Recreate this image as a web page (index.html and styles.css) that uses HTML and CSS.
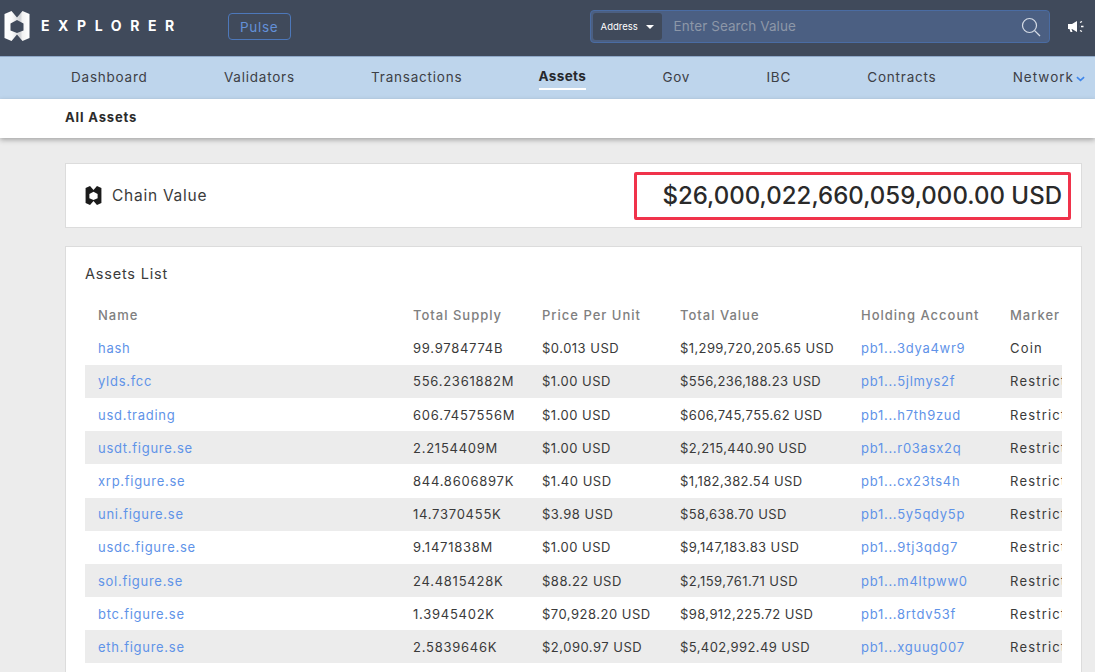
FILE: index.html
```html
<!DOCTYPE html>
<html lang="en">
<head>
<meta charset="utf-8">
<title>Explorer - Assets</title>
<link rel="stylesheet" href="styles.css">
</head>
<body>
<div class="page">
  <header class="topbar">
    <div class="brand">
      <svg class="brand-mark" viewBox="0 0 26 30" width="26" height="30" aria-hidden="true">
        <defs><linearGradient id="lg" x1="0" x2="1"><stop offset="0" stop-color="#fff"/><stop offset="0.3" stop-color="#fafafa"/><stop offset="0.62" stop-color="#cfd1d5"/><stop offset="0.72" stop-color="#f2f2f2"/><stop offset="1" stop-color="#fff"/></linearGradient></defs>
        <path fill="url(#lg)" fill-rule="evenodd" d="M0.5 3 L7.5 0 L13 6.5 L18.5 0 L25.5 3 L25.5 27 L18.5 30 L13 23.5 L7.5 30 L0.5 27 Z M13 9 L6.5 12.5 L6.5 19.5 L13 22 L19.5 19.5 L19.5 12.5 Z"/>
      </svg>
      <span class="brand-name">EXPLORER</span>
    </div>
    <button class="pulse">Pulse</button>
    <div class="search">
      <div class="search-type"><span>Address</span><i class="caret"></i></div>
      <span class="search-input">Enter Search Value</span>
      <svg class="search-icon" viewBox="0 0 20 20" width="20" height="20" aria-hidden="true"><circle cx="8.5" cy="8.5" r="7" fill="none" stroke="#d5dbe5" stroke-width="1.2"/><path d="M13.6 13.6 L19 19" stroke="#d5dbe5" stroke-width="1.3" fill="none"/></svg>
    </div>
    <svg class="announce" viewBox="0 0 17 13" width="17" height="13" aria-hidden="true"><path fill="#fff" d="M1 4 H5 L10 1 V12 L5 9 H4.5 L5.5 12 H3.5 L2.5 9 H1 Z"/><path d="M12 6.5 H12.1" stroke="#fff" stroke-width="2" fill="none"/><path d="M13 2.5 L15 1.5 M14 6.5 H16.5 M13 10.5 L15 11.5" stroke="#fff" stroke-width="1.3" fill="none"/></svg>
  </header>

  <nav class="mainnav">
    <a class="nav-item">Dashboard</a>
    <a class="nav-item">Validators</a>
    <a class="nav-item">Transactions</a>
    <a class="nav-item active">Assets</a>
    <a class="nav-item">Gov</a>
    <a class="nav-item">IBC</a>
    <a class="nav-item">Contracts</a>
    <a class="nav-item network">Network<svg viewBox="0 0 10 6" width="9" height="6" aria-hidden="true"><path d="M1 1 L5 4.6 L9 1" fill="none" stroke="#3f86ea" stroke-width="1.8"/></svg></a>
  </nav>

  <div class="subnav"><a class="subnav-item">All Assets</a></div>

  <main class="content">
    <section class="card chain">
      <div class="chain-label">
        <svg class="chain-mark" viewBox="0 0 26 30" width="17" height="19" aria-hidden="true"><path fill="#1b1b1b" fill-rule="evenodd" d="M0.5 3 L7.5 0 L13 6.5 L18.5 0 L25.5 3 L25.5 27 L18.5 30 L13 23.5 L7.5 30 L0.5 27 Z M13 9 L6.5 12.5 L6.5 19.5 L13 22 L19.5 19.5 L19.5 12.5 Z"/></svg>
        <span>Chain Value</span>
      </div>
      <div class="chain-value">$26,000,022,660,059,000.00 USD</div>
      <div class="highlight"></div>
    </section>

    <section class="card assets">
      <h2 class="assets-title">Assets List</h2>
      <table class="table">
        <colgroup>
          <col class="c1"><col class="c2"><col class="c3"><col class="c4"><col class="c5"><col class="c6">
        </colgroup>
        <thead>
          <tr><th>Name</th><th>Total Supply</th><th>Price Per Unit</th><th>Total Value</th><th>Holding Account</th><th>Marker</th></tr>
        </thead>
        <tbody>
          <tr><td><a>hash</a></td><td>99.9784774B</td><td>$0.013 USD</td><td>$1,299,720,205.65 USD</td><td><a>pb1...3dya4wr9</a></td><td>Coin</td></tr>
          <tr><td><a>ylds.fcc</a></td><td>556.2361882M</td><td>$1.00 USD</td><td>$556,236,188.23 USD</td><td><a>pb1...5jlmys2f</a></td><td>Restricted</td></tr>
          <tr><td><a>usd.trading</a></td><td>606.7457556M</td><td>$1.00 USD</td><td>$606,745,755.62 USD</td><td><a>pb1...h7th9zud</a></td><td>Restricted</td></tr>
          <tr><td><a>usdt.figure.se</a></td><td>2.2154409M</td><td>$1.00 USD</td><td>$2,215,440.90 USD</td><td><a>pb1...r03asx2q</a></td><td>Restricted</td></tr>
          <tr><td><a>xrp.figure.se</a></td><td>844.8606897K</td><td>$1.40 USD</td><td>$1,182,382.54 USD</td><td><a>pb1...cx23ts4h</a></td><td>Restricted</td></tr>
          <tr><td><a>uni.figure.se</a></td><td>14.7370455K</td><td>$3.98 USD</td><td>$58,638.70 USD</td><td><a>pb1...5y5qdy5p</a></td><td>Restricted</td></tr>
          <tr><td><a>usdc.figure.se</a></td><td>9.1471838M</td><td>$1.00 USD</td><td>$9,147,183.83 USD</td><td><a>pb1...9tj3qdg7</a></td><td>Restricted</td></tr>
          <tr><td><a>sol.figure.se</a></td><td>24.4815428K</td><td>$88.22 USD</td><td>$2,159,761.71 USD</td><td><a>pb1...m4ltpww0</a></td><td>Restricted</td></tr>
          <tr><td><a>btc.figure.se</a></td><td>1.3945402K</td><td>$70,928.20 USD</td><td>$98,912,225.72 USD</td><td><a>pb1...8rtdv53f</a></td><td>Restricted</td></tr>
          <tr><td><a>eth.figure.se</a></td><td>2.5839646K</td><td>$2,090.97 USD</td><td>$5,402,992.49 USD</td><td><a>pb1...xguug007</a></td><td>Restricted</td></tr>
        </tbody>
      </table>
    </section>
  </main>
</div>
</body>
</html>
```

FILE: styles.css
```css
* { box-sizing: border-box; }
html, body { margin: 0; padding: 0; }
body {
  font-family: Inter, "Open Sans", "Liberation Sans", sans-serif;
  color: #3a3a3a;
  background: #ececec;
}
.page { height: 672px; overflow: hidden; }

.topbar {
  height: 56px;
  background: #404a5b;
  display: flex;
  align-items: center;
  padding: 0 11px 3px 4px;
}
.brand { display: flex; align-items: center; width: 224px; margin-top: -1px; }
.brand-mark { flex: none; display: block; }
.brand-name {
  margin-left: 11px;
  margin-bottom: 2px;
  color: #fff;
  font-size: 14px;
  font-weight: 700;
  letter-spacing: 8.6px;
}
.pulse {
  width: 63px;
  height: 27px;
  background: transparent;
  border: 1px solid #4d78ba;
  border-radius: 4px;
  color: #6390d8;
  font: 400 13.5px Inter, sans-serif;
  letter-spacing: 0.7px;
  padding: 0;
}
.search {
  margin-left: 299px;
  width: 461px;
  height: 33px;
  background: #4b5f82;
  border: 1px solid #4a6ca3;
  border-radius: 4px;
  display: flex;
  align-items: center;
  padding: 0 8px 0 2px;
}
.search-type {
  width: 69px;
  height: 27px;
  background: #404a5b;
  border-radius: 3px;
  display: flex;
  align-items: center;
  padding-left: 8px;
  color: #fff;
  font-size: 9.5px;
  flex: none;
}
.caret {
  margin-left: 8px;
  width: 0;
  height: 0;
  border-left: 4px solid transparent;
  border-right: 4px solid transparent;
  border-top: 4px solid #fff;
}
.search-input {
  flex: 1;
  margin-left: 12px;
  padding-bottom: 2px;
  color: #8d97a8;
  font-size: 13.5px;
  letter-spacing: 0.07px;
}
.search-icon { flex: none; }
.announce { margin-left: 17px; flex: none; }

.mainnav {
  height: 43px;
  background: #bed5ec;
  border-top: 1px solid #8fa8c8;
  display: flex;
  align-items: center;
  justify-content: space-between;
  padding: 0 10px 2px 71px;
}
.nav-item {
  font-size: 13.5px;
  letter-spacing: 0.78px;
  color: #3d4046;
  line-height: 24px;
  display: flex;
  align-items: center;
}
.nav-item.active {
  font-weight: 700;
  color: #26282c;
  letter-spacing: 0.35px;
  box-shadow: 0 2px 0 #fff;
  margin-top: -2px;
}
.network { letter-spacing: 1px; }
.network svg { margin-left: 2px; margin-top: 3px; }

.subnav {
  height: 39px;
  background: #fff;
  box-shadow: 0 2px 5px rgba(0, 0, 0, 0.3);
  display: flex;
  align-items: center;
  padding: 0 65px 3px;
  position: relative;
}
.subnav-item {
  font-size: 13px;
  font-weight: 700;
  color: #2b2b2b;
  letter-spacing: 0.85px;
}

.content { padding: 25px 13px 0 65px; }
.card {
  background: #fff;
  border: 1px solid #dcdcdc;
}
.chain {
  height: 65px;
  display: flex;
  align-items: center;
  justify-content: space-between;
  padding: 0 19px;
  position: relative;
}
.chain-label {
  display: flex;
  align-items: center;
  font-size: 15.5px;
  letter-spacing: 0.75px;
  color: #3b3b3b;
}
.chain-mark { margin-right: 10px; }
.chain-value {
  font-size: 24px;
  font-weight: 500;
  letter-spacing: 0.02px;
  color: #2a2a2a;
}
.highlight {
  position: absolute;
  left: 568px;
  top: 8px;
  width: 437px;
  height: 48px;
  border: 3px solid #f0334b;
  border-radius: 2px;
}

.assets {
  margin-top: 18px;
  padding: 0 19px 40px;
}
.assets-title {
  margin: 0;
  padding-top: 18px;
  height: 51px;
  font-size: 14.5px;
  font-weight: 400;
  letter-spacing: 0.8px;
  color: #3b3b3b;
}
.table {
  width: 977px;
  table-layout: fixed;
  border-collapse: collapse;
  font-size: 13px;
  letter-spacing: 0.5px;
}
.c1 { width: 315px; }
.c2 { width: 129px; }
.c3 { width: 138px; }
.c4 { width: 181px; }
.c5 { width: 149px; }
.c6 { width: 65px; }
.table th, .table td {
  padding: 0 0 0 13px;
  text-align: left;
  white-space: nowrap;
  overflow: hidden;
  font-weight: 400;
}
.table th {
  height: 33.6px;
  color: #808080;
  font-weight: 500;
  letter-spacing: 1px;
}
.table td { height: 33.2px; color: #3a3a3a; }
.table td:nth-child(2) { letter-spacing: 0.75px; }
.table td:nth-child(4) { letter-spacing: 0.4px; }
.table td:last-child { letter-spacing: 1.2px; }
.table a { color: #5f93e8; letter-spacing: 0.72px; }
.table tbody tr:nth-child(even) td { background: #ececec; }
```
